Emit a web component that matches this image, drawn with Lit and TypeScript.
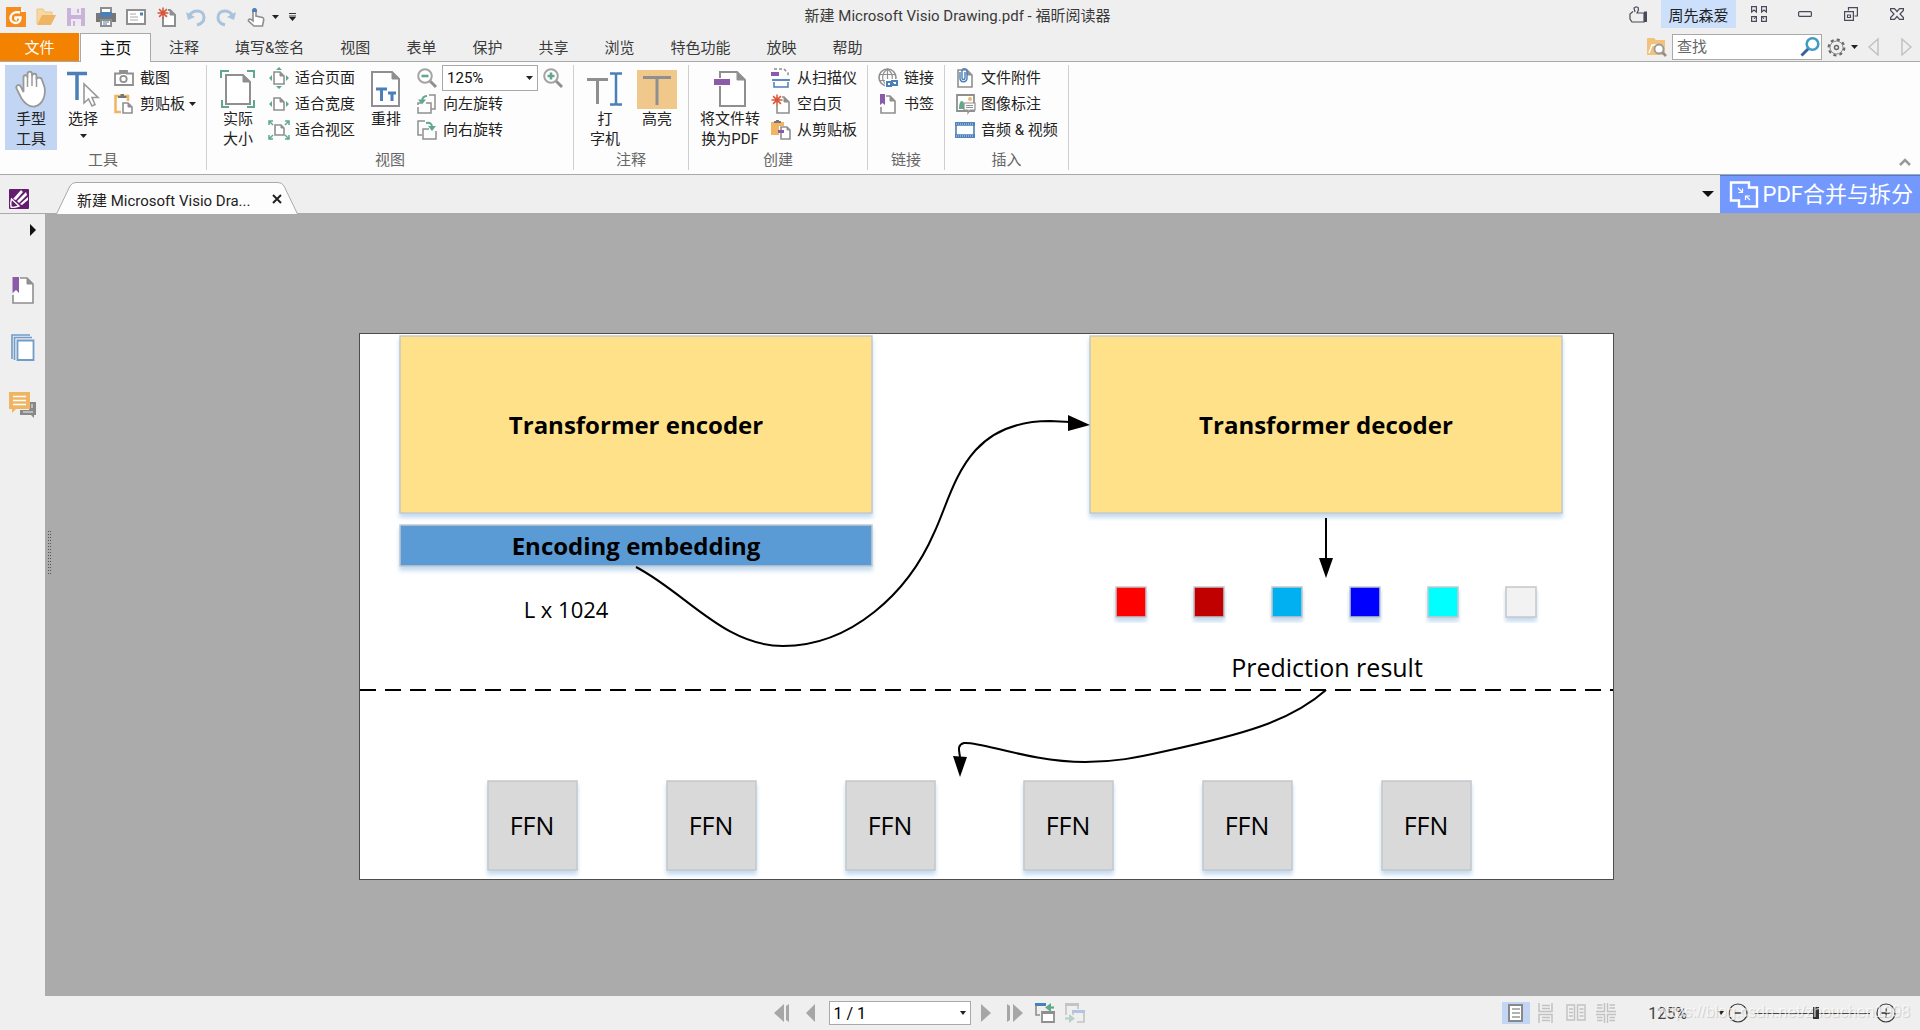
import { LitElement, html, svg, css, nothing, type TemplateResult, type SVGTemplateResult } from "lit";
import { customElement } from "lit/decorators.js";
import { classMap } from "lit/directives/class-map.js";

const GREY = "#8f8f8f";
const GREEN = "#5fa88a";
const BLUE = "#4a7fb8";
const PURPLE = "#8b5aa8";
const AMBER = "#efb563";

const icon = (w: number, h: number, body: SVGTemplateResult) =>
  html`<svg class="icon" width=${w} height=${h} viewBox="0 0 ${w} ${h}" fill="none" aria-hidden="true">${body}</svg>`;

/* A sheet of paper with its top right corner folded over. */
const sheet = (x: number, y: number, w: number, h: number, f: number, sw = 2, stroke = GREY) => svg`
  <path d="M${x} ${y}H${x + w - f}L${x + w} ${y + f}V${y + h}H${x}Z" fill="#fff" stroke=${stroke} stroke-width=${sw}/>
  <path d="M${x + w - f} ${y}V${y + f}H${x + w}Z" fill=${stroke} stroke=${stroke}/>`;

const spark = (x: number, y: number, r: number) => {
  const d = Math.round(r * 7) / 10;
  return svg`<path d="M${x - r} ${y}H${x + r}M${x} ${y - r}V${y + r}M${x - d} ${y - d}L${x + d} ${y + d}M${x - d} ${y + d}L${x + d} ${y - d}" stroke="#d9583a" stroke-width="1.5"/><circle cx=${x} cy=${y} r="2.4" fill="#d9583a"/>`;
};

const lens = (plus: boolean) => icon(20, 20, svg`
  <path d="M13 13L19 19" stroke="${GREY}" stroke-width="3"/>
  <circle cx="8" cy="8" r="6.8" fill="#fff" stroke="#a3a3a3" stroke-width="2"/>
  <path d=${plus ? "M4.5 8H11.5M8 4.5V11.5" : "M4.5 8H11.5"} stroke="${GREEN}" stroke-width="2.6"/>`);

const caret = (w = 7) => icon(w, 4, svg`<path d="M0 0H${w}L${w / 2} 4Z" fill="#222"/>`);

const icons = {
  logo: icon(20, 20, svg`<path d="M0 0H15L20 5V20H0Z" fill="#f68b1f"/><path d="M15 0V5H20Z" fill="#fff"/>
    <path d="M14 5.5C8 4 4.500 7.500 4.500 11C4.500 14 7 16 10 16C13 15.700 14.500 13.500 14.500 10.500L9.500 10.500C9 12 9.500 12.500 11 12.500" stroke="#fff" stroke-width="2.400"/>`),
  open: icon(20, 18, svg`<path d="M1 16V1H7L9 4H16V8" fill="#f5d9a5" stroke="#efc37c"/><path d="M1 17L6 7H20L15 17Z" fill="${AMBER}"/>`),
  save: icon(18, 18, svg`<path d="M0 0H18V18H0Z" fill="#c9b3d8"/><path d="M4 0H14V7H4ZM4 11H14V18H4Z" fill="#efe9f4"/><path d="M10 1H12V5H10ZM6 13H8V18H6Z" fill="#c9b3d8"/>`),
  print: icon(20, 20, svg`<path d="M5 5V1H15V5" fill="#fff" stroke="${GREY}" stroke-width="2"/><path d="M0 6H20V15H0Z" fill="#777"/><path d="M4 5H16V10H4Z" fill="${BLUE}"/><path d="M5 13H15V19H5Z" fill="#fff" stroke="${GREY}" stroke-width="2"/><path d="M7 15H13M7 17H11" stroke="${BLUE}"/>`),
  mail: icon(20, 16, svg`<path d="M1 1H19V15H1Z" fill="#fff" stroke="${GREY}" stroke-width="2"/><path d="M4 5H10M4 8H12M4 11H12" stroke="#aaa"/><path d="M14 3.500H17V6.500H14Z" fill="${BLUE}"/>`),
  create: icon(19, 20, svg`${sheet(6, 3, 12, 16, 5)}<path d="M0 0H11V10H0Z" fill="#efefef"/>${spark(6, 6, 5.5)}`),
  undo: icon(20, 18, svg`<path d="M3 8C7 1 18 1 18 9.500C18 14 15 16 11 17" stroke="#a9c3dc" stroke-width="3"/><path d="M0 4L2 12L9 9Z" fill="#a9c3dc"/>`),
  redo: icon(20, 18, svg`<path d="M17 8C13 1 2 1 2 9.500C2 14 5 16 9 17" stroke="#a9c3dc" stroke-width="3"/><path d="M20 4L18 12L11 9Z" fill="#a9c3dc"/>`),
  touch: icon(18, 20, svg`<path d="M6 12V3.500C6 1.500 9 1.500 9 3.500V9L15.500 10.500C17 11 17 12 16.500 14L15.500 19H7L1.500 14C1 12.500 3 11.500 4 12.500L6 14Z" fill="#fff" stroke="${GREY}" stroke-width="1.600"/><path d="M5 5C4.500 -.5 10.500 -.5 10 5" fill="${BLUE}"/>`),
  more: icon(7, 8, svg`<path d="M0 .5H7M0 3H7" stroke="#333"/><path d="M0 4H7L3.500 8Z" fill="#222"/>`),

  hand: icon(32, 38, svg`<path d="M8.500 22V7.500C8.500 4.500 12.500 4.500 12.500 7.500V4C12.500 .8 17 .8 17 4V6C17.500 3 21.500 3 21.500 6V9.500C21.500 7 26.500 7 27 10L29.500 17C31 25 28 35 19.500 36.500C13 37 9.500 33 6.500 28.500L1.500 18.500C.5 15.500 4 13.500 5.800 16.500Z" fill="#fff" stroke="#999" stroke-width="1.800"/><path d="M12.500 7V17M17 5V16M21.500 7V17" stroke="#999" stroke-width="1.500"/>`),
  select: icon(32, 36, svg`<path d="M0 2.500H20M10 2.500V29" stroke="${BLUE}" stroke-width="3.500"/><path d="M17 13V32L21.500 28L25 35L28 33.500L25 26.500H31Z" fill="#fff" stroke="#999" stroke-width="1.600"/>`),
  camera: icon(20, 16, svg`<path d="M1 3.500H6V1H13V3.500H19V15H1Z" fill="#fff" stroke="${GREY}" stroke-width="1.800"/><path d="M6 1H13V4H6Z" fill="${GREY}"/><circle cx="9.500" cy="9" r="3.200" stroke="${GREY}" stroke-width="1.800"/>`),
  clipboard: icon(20, 20, svg`<path d="M14 7V2H1.500V18H7" stroke="${AMBER}" stroke-width="2.500"/><path d="M4 4V2H6.500V0H10V2H12.500V4Z" fill="#777"/>${sheet(9, 9, 9, 10, 4, 1.6)}`),
  actual: icon(34, 38, svg`<path d="M0 8V1H8M26 1H33V8M33 30V37H26M8 37H1V30" stroke="${GREEN}" stroke-width="2"/>${sheet(5, 5, 24, 29, 7, 2)}`),
  fitPage: icon(20, 20, svg`${sheet(5, 4, 10, 12, 4, 1.6)}<path d="M7 2L10 -1L13 2ZM7 18L10 21L13 18ZM3 7L0 10L3 13ZM17 7L20 10L17 13Z" fill="${GREEN}"/>`),
  fitWidth: icon(20, 20, svg`${sheet(5, 4, 10, 12, 4, 1.6)}<path d="M3 7L0 10L3 13ZM17 7L20 10L17 13Z" fill="${GREEN}"/>`),
  fitView: icon(20, 20, svg`${sheet(6, 5, 9, 10, 3, 1.6)}<path d="M0 5V1H4M0 1L4 5M16 1H20V5M20 1L16 5M20 15V19H16M20 19L16 15M4 19H0V15M0 19L4 15" stroke="${GREEN}" stroke-width="1.500"/>`),
  reflow: icon(30, 37, svg`${sheet(1, 1, 27, 34, 7, 2)}<path d="M5 18H16M10.500 18V30M17 22H25M21 22V30" stroke="${BLUE}" stroke-width="3"/>`),
  rotateLeft: icon(20, 20, svg`<path d="M12 1H18V15H14" stroke="${GREY}" stroke-width="1.500"/><path d="M1 13V19H14V9H9M1 11V9H4" stroke="${GREY}" stroke-width="1.500"/><path d="M10 2C6 2 5 4 5 8" stroke="${GREEN}" stroke-width="2"/><path d="M1 5.500H9L5 10.500Z" fill="${GREEN}"/>`),
  rotateRight: icon(20, 20, svg`<path d="M8 1H1V15H5" stroke="${GREY}" stroke-width="1.500"/><path d="M12 9H6V19H19V11" stroke="${GREY}" stroke-width="1.500"/><path d="M9 3C13 2 15 4 15 7" stroke="${GREEN}" stroke-width="2"/><path d="M11 6H19L15 11Z" fill="${GREEN}"/>`),
  typewriter: icon(36, 34, svg`<path d="M0 7.500H21M10.500 7.500V32" stroke="${GREY}" stroke-width="3"/><path d="M23 1.500H28L29 2.500L30 1.500H35M29 2V32M23 32.500H28L29 31.500L30 32.500H35" stroke="${BLUE}" stroke-width="2.500"/>`),
  highlight: icon(40, 39, svg`<path d="M0 0H40V39H0Z" fill="#f0c88c"/><path d="M6 7.500H34M20 7.500V35" stroke="${GREY}" stroke-width="3"/>`),
  toPdf: icon(32, 37, svg`${sheet(6, 1, 25, 34, 8, 2)}<path d="M0 7H17V15H0Z" fill="#fdfdfd"/><path d="M0 8H16V14H0Z" fill="${PURPLE}"/>`),
  scanner: icon(20, 20, svg`<path d="M3 1H13L17 5V9" stroke="${GREY}" stroke-width="1.500" stroke-dasharray="3 2"/><path d="M0 4H8V8H0Z" fill="${PURPLE}"/><path d="M1 12H19" stroke="${BLUE}" stroke-width="1.800"/><path d="M3 14V19H17V14" stroke="${BLUE}" stroke-width="1.500"/>`),
  blank: icon(20, 20, svg`${sheet(6, 3, 12, 16, 5, 1.6)}<path d="M0 0H11V11H0Z" fill="#fdfdfd"/>${spark(6, 6, 5.5)}`),
  fromClip: icon(20, 20, svg`<path d="M0 2H13V6H8V15H0Z" fill="${AMBER}"/><path d="M3 3V1H5V0H8V1H10V3Z" fill="#777"/>${sheet(10, 7, 9, 12, 3, 1.6)}<path d="M7 10H13V13H7Z" fill="${PURPLE}"/>`),
  link: icon(20, 20, svg`<circle cx="9.500" cy="9.500" r="8.500" fill="#fff" stroke="${GREY}" stroke-width="1.600"/><path d="M1 6.500H18M1 12.500H18M9.500 1V18M9.500 1C3 6 3 13 9.500 18M9.500 1C16 6 16 13 9.500 18" stroke="${GREY}" stroke-width="1.200"/><path d="M7 11H20V20H7Z" fill="#fdfdfd"/><path d="M9 14H13V18H9ZM14 13H19V17H14ZM12 16H16" stroke="${BLUE}" stroke-width="2"/>`),
  bookmark: icon(20, 20, svg`${sheet(3, 2, 14, 17, 5, 1.6)}<path d="M1 0H8V13H1Z" fill="#fdfdfd"/><path d="M2 0H7V11L4.500 9L2 11Z" fill="${PURPLE}"/>`),
  attach: icon(20, 20, svg`${sheet(3, 2, 14, 17, 5, 1.6)}<path d="M5 4V10C5 15 12 15 12 10V3C12 0 7 0 7 3V10C7 12 10 12 10 10V4" stroke="${BLUE}" stroke-width="1.400"/>`),
  image: icon(20, 20, svg`<path d="M2 1H19V17H2Z" fill="#fff" stroke="${GREY}" stroke-width="1.800"/><path d="M4 15C4 10 5 7 7 7C9 7 9 11 9 15Z" fill="${GREEN}"/><circle cx="15" cy="5" r="2" fill="${AMBER}"/><path d="M9 9H20V16H15L13 19V16H9Z" fill="#fff" stroke="${GREY}" stroke-width="1.200"/><path d="M11 11.500H18M11 13.500H18" stroke="${GREY}"/>`),
  media: icon(20, 16, svg`<path d="M1 1H19V15H1Z" fill="#fff" stroke="${BLUE}" stroke-width="1.600"/><path d="M0 2H20M0 14H20" stroke="${BLUE}" stroke-width="3.500"/><path d="M1 2H19M1 14H19" stroke="#cfe0f0" stroke-width="1" stroke-dasharray="1 1"/>`),

  account: icon(20, 17, svg`<path d="M6 6L5 2L7 .8L9 1.500L9.500 4L8 7H15V16H3L1 13V8L4 5.500" stroke="#4a4a5a" stroke-width="1.200"/><path d="M15 5.500H18V16H15Z" fill="#4a4a5a"/>`),
  skins: icon(16, 16, svg`<path d="M.6 .6H5.400V6L3 4L.6 6ZM10.600 .6H15.400V6L13 4L10.600 6ZM.6 10.600H5.400V15.400H.6ZM10.600 10.600H15.400V15.400H10.600Z" stroke="#4a4a5a" stroke-width="1.200"/><path d="M3 13L5 10.500M13 13L11 10.500" stroke="#4a4a5a"/>`),
  minimize: icon(14, 6, svg`<rect x=".6" y=".6" width="12.800" height="4.800" rx="1" stroke="#4a4a5a" stroke-width="1.200"/>`),
  restore: icon(14, 14, svg`<path d="M4.500 3.500V.6H13.400V9H10.500" stroke="#4a4a5a" stroke-width="1.200"/><path d="M.6 4.600H9.400V13.400H.6ZM3.500 8H6.500V10.500H3.500Z" stroke="#4a4a5a" stroke-width="1.200"/>`),
  close: icon(14, 12, svg`<path d="M.6 .6H4.500L7 3.500L9.500 .6H13.400V2.500L10 6L13.400 9.500V11.400H9.500L7 8.500L4.500 11.400H.6V9.500L4 6L.6 2.500Z" stroke="#4a4a5a" stroke-width="1.200"/>`),
  findFolder: icon(20, 20, svg`<path d="M0 1H7L9 3H18V18H0Z" fill="#f0c27c"/><path d="M2 16L5 8H12" stroke="#fff" stroke-width="1.500"/><path d="M15 15L19 19" stroke="${GREY}" stroke-width="2.500"/><circle cx="12" cy="12" r="4.500" fill="#fff" stroke="#999" stroke-width="1.800"/>`),
  search: icon(20, 20, svg`<path d="M9 11L1.500 18.500" stroke="#3a62a0" stroke-width="3"/><circle cx="12.500" cy="7" r="5.800" fill="#fff" stroke="#3f9cc4" stroke-width="2.600"/>`),
  gear: icon(19, 19, svg`<circle cx="9.500" cy="9.500" r="7.800" stroke="#666" stroke-width="2.200" stroke-dasharray="3.060 3.060"/><circle cx="9.500" cy="9.500" r="6.500" fill="#efefef" stroke="#888" stroke-width="1"/><circle cx="9.500" cy="9.500" r="2" stroke="#666" stroke-width="1.400"/>`),
  back: icon(11, 18, svg`<path d="M10 1V17L1 9Z" stroke="#c0c0c0" stroke-width="1.400"/>`),
  forward: icon(11, 18, svg`<path d="M1 1V17L10 9Z" stroke="#c0c0c0" stroke-width="1.400"/>`),
  collapse: icon(12, 8, svg`<path d="M1 7L6 2L11 7" stroke="#999" stroke-width="2.500"/>`),

  editor: icon(20, 20, svg`<rect width="20" height="20" rx="1" fill="#641b70"/><path d="M4 10L12 1L14 3L7 11ZM8 12L17 3L18 6L10 14ZM11 15L19 8V11L13 16Z" fill="#fff"/><path d="M2.500 10L10 17C6 18.500 3 18.500 2 18C1.500 15 1.800 12 2.500 10Z" stroke="#fff" stroke-width="1.400"/>`),
  closeTab: icon(10, 10, svg`<path d="M1 1L9 9M9 1L1 9" stroke="#222" stroke-width="2"/>`),
  listDown: icon(12, 6, svg`<path d="M0 0H12L6 6Z" fill="#111"/>`),
  merge: icon(28, 27, svg`<path d="M1 1.500H19V6.500H27V25.500H9V19.500H1Z" stroke="#fff" stroke-width="2.400"/><path d="M8 7L12 11M12.500 7.500V11.500H8.500M20 19L16 15M15.500 19V15H20" stroke="#fff" stroke-width="1.200"/>`),

  expand: icon(6, 12, svg`<path d="M0 0L6 6L0 12Z" fill="#111"/>`),
  panelBookmark: icon(24, 28, svg`${sheet(2, 1, 20, 25, 6, 1.6)}<path d="M0 0H9V18H0Z" fill="#efefef"/><path d="M9 1.800V18H2.800" fill="#fff"/><path d="M1.500 0H8V16L5 13L1.500 16Z" fill="${PURPLE}"/>`),
  panelPages: icon(24, 28, svg`<path d="M1 25V1H19M3.500 26V3.500H21" stroke="#6f9cc9" stroke-width="1.600"/><path d="M6.500 6.500H22.500V26H6.500Z" fill="#fff" stroke="#6f9cc9" stroke-width="1.800"/>`),
  panelNotes: icon(28, 26, svg`<path d="M17 10H27V23H25V26L22 23H11V18H20V10Z" fill="#888"/><path d="M14 20H24M23 12V16" stroke="#efefef"/><path d="M0 0H21V17H7L3 21V17H0Z" fill="${AMBER}"/><path d="M4 4.500H17M4 8.500H17M4 12.500H17" stroke="#fff" stroke-width="1.400"/>`),
  grip: icon(4, 44, svg`<path d="M.5 0V44M2.500 0V44" stroke="#555" stroke-dasharray="1 2"/>`),

  first: icon(16, 18, svg`<path d="M10 0V18L0 9ZM12 2L15 0V18L12 16Z" fill="#a6a6a6"/>`),
  prev: icon(10, 18, svg`<path d="M9 0V18L0 9Z" fill="#a6a6a6"/>`),
  next: icon(10, 18, svg`<path d="M0 0V18L10 9Z" fill="#a6a6a6"/>`),
  last: icon(16, 18, svg`<path d="M6 0V18L16 9ZM0 0L3 2V16L0 18Z" fill="#a6a6a6"/>`),
  prevView: icon(20, 20, svg`<path d="M5 12H1V1H11" stroke="${GREY}" stroke-width="1.600"/><path d="M0 0H11V3H0Z" fill="${BLUE}"/><path d="M7 9H19V19H7Z" fill="#fff" stroke="${GREY}" stroke-width="1.800"/><path d="M7 8H20V11H7Z" fill="${GREY}"/><path d="M19 4.500H13" stroke="${GREEN}" stroke-width="2.200"/><path d="M16 0V9L10 4.500Z" fill="${GREEN}"/>`),
  nextView: icon(20, 20, svg`<path d="M1 12V1H13V6" stroke="#c4c4c4" stroke-width="1.600"/><path d="M0 0H14V3H0Z" fill="#c4c4c4"/><path d="M12 19H19V8H8V12" stroke="#c4c4c4" stroke-width="1.600"/><path d="M7 7H20V10H7Z" fill="#b0c6e0"/><path d="M0 15.500H6" stroke="#b5d2c5" stroke-width="2.200"/><path d="M4 11V20L10 15.500Z" fill="#b5d2c5"/>`),
  single: icon(16, 18, svg`<path d="M1 1H14V17H1Z" fill="#fff" stroke="#888" stroke-width="2"/><path d="M4 5H12M4 9H12M4 13H12" stroke="#999" stroke-width="1.400"/>`),
  continuous: icon(16, 20, svg`<path d="M1 0V8.500H14V0M1 20V11.500H14V20M4 2.500H12M4 5.500H12M4 14.500H12M4 17.500H12" stroke="#c2c2c2" stroke-width="1.500"/>`),
  facing: icon(20, 18, svg`<path d="M1 1H8.500V16H1ZM11.500 1H19V16H11.500ZM3 5H7M3 8.500H7M3 12H7M13.500 5H17.500M13.500 8.500H17.500M13.500 12H17.500" stroke="#c2c2c2" stroke-width="1.400"/>`),
  facingContinuous: icon(20, 20, svg`<path d="M0 8.500H8.500V0M20 8.500H11.500V0M0 11.500H8.500V20M20 11.500H11.500V20M1 2H6.500M1 5H6.500M13.500 2H19M13.500 5H19M1 14.500H6.500M1 17.500H6.500M13.500 14.500H19M13.500 17.500H19" stroke="#c2c2c2" stroke-width="1.400"/>`),
  zoomOut: icon(20, 20, svg`<circle cx="10" cy="10" r="9" stroke="#333" stroke-width="1.200"/><path d="M6.500 10H13.500" stroke="#333" stroke-width="1.400"/>`),
  zoomIn: icon(20, 20, svg`<circle cx="10" cy="10" r="9" stroke="#333" stroke-width="1.200"/><path d="M5.500 10H14.500M10 5.500V14.500" stroke="#333" stroke-width="1.400"/>`),
};

type IconName = keyof typeof icons;

const controls = css`
  :host, * { box-sizing: border-box; }
  button, input, select { font: inherit; color: inherit; margin: 0; }
  button { display: flex; align-items: center; justify-content: center; padding: 0; border: 0; background: none; white-space: nowrap; }
  select, input { appearance: none; border: 1px solid #a9a9a9; border-radius: 0; background: #fff; outline: 0; }
  .icon { display: block; flex: none; overflow: visible; }
  .combo { display: grid; align-items: center; }
  .combo > * { grid-area: 1 / 1; }
  .combo .icon { justify-self: end; margin-right: 5px; pointer-events: none; }
`;

@customElement("title-bar")
export class TitleBar extends LitElement {
  static styles = [controls, css`
    :host { display: grid; grid-template-columns: 1fr auto 1fr; height: 33px; color: #3a3a3a; }
    .quick { display: flex; align-items: center; gap: 10px; padding-left: 6px; }
    .quick button { width: 20px; height: 33px; }
    .quick .slim { width: 7px; }
    .touch { margin-right: -4px; }
    .title { margin: 0; padding-right: 5px; font-size: 15px; font-weight: 400; line-height: 33px; }
    .window { display: flex; justify-content: flex-end; align-items: center; height: 28px; }
    .window button { width: 46px; height: 28px; }
    .window .user { width: 75px; background: #cce0fb; font-size: 15px; color: #222; }
    .window .account { width: 36px; padding-right: 8px; }
  `];

  private quick: [IconName, string][] = [
    ["logo", "福昕阅读器"], ["open", "打开"], ["save", "保存"], ["print", "打印"],
    ["mail", "邮件"], ["create", "新建"], ["undo", "撤销"], ["redo", "重做"],
  ];

  render() {
    return html`
      <div class="quick">
        ${this.quick.map(([name, label]) => html`<button aria-label=${label}>${icons[name]}</button>`)}
        <button class="touch" aria-label="触摸模式">${icons.touch}</button>
        <button class="slim" aria-label="触摸选项">${caret()}</button>
        <button class="slim" aria-label="自定义">${icons.more}</button>
      </div>
      <h1 class="title">新建 Microsoft Visio Drawing.pdf - 福昕阅读器</h1>
      <div class="window">
        <button class="account" aria-label="账户">${icons.account}</button>
        <button class="user">周先森爱</button>
        <button aria-label="皮肤">${icons.skins}</button>
        <button aria-label="最小化">${icons.minimize}</button>
        <button aria-label="还原">${icons.restore}</button>
        <button aria-label="关闭">${icons.close}</button>
      </div>`;
  }
}

@customElement("ribbon-tabs")
export class RibbonTabs extends LitElement {
  static styles = [controls, css`
    :host { display: flex; height: 29px; border-bottom: 1px solid #a9a9a9; font-size: 15px; color: #3a3a3a; }
    .tabs { display: flex; flex: 1; }
    .tab { height: 28px; padding: 0 18px 2px; }
    .file { width: 79px; margin-right: 1px; background: #f28200; color: #fff; }
    .active { height: 29px; width: 71px; padding: 0 0 2px; border: 1px solid #a9a9a9; border-bottom: 0; background: #fdfdfd; font-size: 16px; color: #111; }
    .tools { display: flex; align-items: center; height: 28px; padding-right: 8px; }
    .search { display: grid; align-items: center; margin: 0 5px; }
    .search > * { grid-area: 1 / 1; }
    .field { width: 150px; height: 26px; padding: 0 28px 0 4px; }
    .field::placeholder { color: #666; opacity: 1; }
    .search button { justify-self: end; margin-right: 2px; }
    .down { margin: 0 10px 0 5px; }
    .forward { margin-left: 22px; }
  `];

  private tabs = ["注释", "填写&签名", "视图", "表单", "保护", "共享", "浏览", "特色功能", "放映", "帮助"];

  render() {
    return html`
      <nav class="tabs">
        <button class="tab file">文件</button>
        <button class="tab active">主页</button>
        ${this.tabs.map((t) => html`<button class="tab">${t}</button>`)}
      </nav>
      <div class="tools">
        <button aria-label="高级搜索">${icons.findFolder}</button>
        <div class="search">
          <input class="field" type="text" placeholder="查找" aria-label="查找" />
          <button aria-label="搜索">${icons.search}</button>
        </div>
        <button aria-label="设置">${icons.gear}</button>
        <button class="down" aria-label="设置选项">${caret()}</button>
        <button aria-label="上一个">${icons.back}</button>
        <button class="forward" aria-label="下一个">${icons.forward}</button>
      </div>`;
  }
}

@customElement("ribbon-panel")
export class RibbonPanel extends LitElement {
  static styles = [controls, css`
    :host { display: flex; padding: 3px 0 4px; background: #fdfdfd; border-bottom: 1px solid #a9a9a9; font-size: 15px; color: #222; }
    .group { display: flex; flex-direction: column; padding: 0 5px; border-right: 1px solid #d0d0d0; }
    .items { display: flex; height: 85px; }
    .name { margin: 0; font-size: 15px; font-weight: 400; line-height: 20px; text-align: center; color: #666; }
    .big { flex-direction: column; justify-content: flex-start; width: 52px; height: 85px; padding-top: 4px; line-height: 20px; }
    .big.on { background: #c2d5f2; }
    .big.wide { width: 72px; }
    .face { display: grid; place-items: center; height: 40px; }
    .big .caret { margin-top: 5px; }
    .col { display: flex; flex-direction: column; margin: 0 5px; }
    .row { display: flex; align-items: center; justify-content: flex-start; gap: 6px; height: 26px; line-height: 24px; }
    .zoom { gap: 5px; }
    .slot { display: grid; place-items: center; width: 20px; }
    .row .caret { margin-left: -2px; }
    .combo select { width: 96px; height: 26px; padding: 0 4px; color: #111; }
    .end { flex: 1; display: flex; align-items: flex-end; justify-content: flex-end; padding: 0 9px 4px; }
  `];

  private big(name: IconName, lines: string[], mod: { on?: boolean; wide?: boolean; down?: boolean } = {}) {
    return html`<button class=${classMap({ big: true, on: !!mod.on, wide: !!mod.wide })}>
      <span class="face">${icons[name]}</span>
      ${lines.map((l) => html`<span>${l}</span>`)}
      ${mod.down ? html`<span class="caret">${caret()}</span>` : nothing}
    </button>`;
  }

  private row(name: IconName, label: string, down = false) {
    return html`<button class="row"><span class="slot">${icons[name]}</span>${label}${
      down ? html`<span class="caret">${caret()}</span>` : nothing}</button>`;
  }

  private group(name: string, body: TemplateResult) {
    return html`<section class="group"><div class="items">${body}</div><h2 class="name">${name}</h2></section>`;
  }

  render() {
    return html`
      ${this.group("工具", html`
        ${this.big("hand", ["手型", "工具"], { on: true })}
        ${this.big("select", ["选择"], { down: true })}
        <div class="col">${this.row("camera", "截图")}${this.row("clipboard", "剪贴板", true)}</div>`)}
      ${this.group("视图", html`
        ${this.big("actual", ["实际", "大小"])}
        <div class="col">${this.row("fitPage", "适合页面")}${this.row("fitWidth", "适合宽度")}${this.row("fitView", "适合视区")}</div>
        ${this.big("reflow", ["重排"])}
        <div class="col">
          <div class="row zoom">
            <button aria-label="缩小">${lens(false)}</button>
            <span class="combo"><select aria-label="缩放比例"><option>125%</option></select>${caret()}</span>
            <button aria-label="放大">${lens(true)}</button>
          </div>
          ${this.row("rotateLeft", "向左旋转")}${this.row("rotateRight", "向右旋转")}
        </div>`)}
      ${this.group("注释", html`${this.big("typewriter", ["打", "字机"])}${this.big("highlight", ["高亮"])}`)}
      ${this.group("创建", html`
        ${this.big("toPdf", ["将文件转", "换为PDF"], { wide: true })}
        <div class="col">${this.row("scanner", "从扫描仪")}${this.row("blank", "空白页")}${this.row("fromClip", "从剪贴板")}</div>`)}
      ${this.group("链接", html`<div class="col">${this.row("link", "链接")}${this.row("bookmark", "书签")}</div>`)}
      ${this.group("插入", html`<div class="col">${this.row("attach", "文件附件")}${this.row("image", "图像标注")}${this.row("media", "音频 & 视频")}</div>`)}
      <div class="end"><button aria-label="折叠功能区">${icons.collapse}</button></div>`;
  }
}

@customElement("document-tabs")
export class DocumentTabs extends LitElement {
  static styles = [controls, css`
    :host { display: flex; align-items: flex-end; height: 39px; border-bottom: 1px solid #a9a9a9; font-size: 15px; color: #222; }
    .editor { width: 38px; height: 30px; padding-top: 2px; }
    .tab { display: grid; margin: 0 0 -1px 18px; }
    .tab > * { grid-area: 1 / 1; }
    .shape { display: block; }
    .label { display: flex; align-items: center; justify-content: space-between; padding: 2px 16px 0 21px; }
    .end { flex: 1; display: flex; align-items: center; justify-content: flex-end; height: 38px; gap: 6px; }
    .banner { display: flex; align-items: center; gap: 5px; height: 38px; padding: 0 7px 0 10px; border-top: 1px solid #4a7ae0; background: #7399ff; color: #fff; font-size: 22px; line-height: 34px; text-decoration: none; white-space: nowrap; }
  `];

  render() {
    return html`
      <button class="editor" aria-label="编辑器">${icons.editor}</button>
      <div class="tab">
        <svg class="shape" width="242" height="32" viewBox="0 0 242 32" aria-hidden="true">
          <path d="M.5 32L14 4Q16 .5 20 .5H222Q226 .5 228 4L241.500 32" fill="#fdfdfd" stroke="#a9a9a9"/>
        </svg>
        <div class="label">
          <button>新建 Microsoft Visio Dra...</button>
          <button aria-label="关闭标签">${icons.closeTab}</button>
        </div>
      </div>
      <div class="end">
        <button aria-label="标签列表">${icons.listDown}</button>
        <a class="banner" href="#merge">${icons.merge}<span>PDF合并与拆分</span></a>
      </div>`;
  }
}

@customElement("side-panel")
export class SidePanel extends LitElement {
  static styles = [controls, css`
    :host { display: flex; flex-direction: column; align-items: center; width: 45px; padding-top: 8px; background: #efefef; }
    .expand { align-self: flex-end; justify-content: flex-end; width: 24px; height: 16px; padding-right: 9px; margin-bottom: 24px; }
    .item { width: 45px; height: 57px; }
  `];

  render() {
    return html`
      <button class="expand" aria-label="展开">${icons.expand}</button>
      <button class="item" aria-label="书签">${icons.panelBookmark}</button>
      <button class="item" aria-label="页面">${icons.panelPages}</button>
      <button class="item" aria-label="注释">${icons.panelNotes}</button>`;
  }
}

@customElement("document-page")
export class DocumentPage extends LitElement {
  static styles = css`
    :host { display: block; box-sizing: border-box; border: 1px solid #4d4d4d; background: #fff; }
    .sheet { display: block; width: 100%; height: auto; }
    text { font-family: "Open Sans", sans-serif; text-anchor: middle; fill: #000; }
    .box { stroke: #c4c8cc; stroke-width: 1.5; filter: url(#soft); }
    .heading { font-size: 24px; font-weight: 700; }
    .label { font-size: 25px; }
    .note { font-size: 22px; }
    .line { fill: none; stroke: #000; stroke-width: 2; }
    .dash { stroke-dasharray: 16 9; }
  `;

  private swatches = ["#ff0000", "#c00000", "#00b0f0", "#0000ff", "#00ffff", "#f2f2f2"];

  render() {
    return html`<svg class="sheet" viewBox="0 0 1253 545" role="img" aria-label="Transformer">
      <defs>
        <filter id="soft" x="-10%" y="-10%" width="120%" height="130%" color-interpolation-filters="sRGB">
          <feDropShadow dx="0" dy="4" stdDeviation="2" flood-color="#9dc3e6" flood-opacity="0.6"/>
        </filter>
      </defs>
      <rect class="box" x="40" y="2" width="472" height="177" fill="#ffe18a"/>
      <text class="heading" x="276" y="100">Transformer encoder</text>
      <rect class="box" x="40" y="191" width="472" height="41" fill="#5b9bd5"/>
      <text class="heading" x="276" y="221">Encoding embedding</text>
      <text class="note" x="206" y="284">L x 1024</text>
      <rect class="box" x="730" y="2" width="472" height="177" fill="#ffe18a"/>
      <text class="heading" x="966" y="100">Transformer decoder</text>
      <path class="line" d="M276 233C326 259 364 312 423 312C491 312 548 259 574 199C594 157 603 87 690 87L710 88"/>
      <path d="M730 91L708 97V81Z"/>
      <path class="line" d="M966 184V226"/>
      <path d="M966 244L959 224H973Z"/>
      ${this.swatches.map((c, i) => svg`<rect class="box" x=${756 + i * 78} y="253" width="30" height="30" fill=${c}/>`)}
      <text class="label" x="967" y="343">Prediction result</text>
      <path class="line dash" d="M0 356H1253"/>
      <path class="line" d="M966 356C930 388 880 401 806 417C775 424 755 428 725 428C670 428 620 407 604 409C597 411 599 416 600 423"/>
      <path d="M600 443L593 422L607 423Z"/>
      ${[0, 1, 2, 3, 4, 5].map((i) => svg`
        <rect class="box" x=${128 + Math.round(i * 178.8)} y="447" width="89" height="89" fill="#d9d9d9"/>
        <text class="label" x=${172 + Math.round(i * 178.8)} y="501">FFN</text>`)}
    </svg>`;
  }
}

@customElement("status-bar")
export class StatusBar extends LitElement {
  static styles = [controls, css`
    :host { position: relative; display: grid; grid-template-columns: 1fr auto 1fr; align-items: center; height: 34px; font-size: 16px; color: #222; }
    .nav { display: flex; align-items: center; gap: 10px; grid-column: 2; margin-right: 62px; }
    .nav .first { margin-right: 6px; }
    .nav .combo { margin-left: 3px; }
    .nav .last { margin: 0 2px 0 6px; }
    .nav select { width: 142px; height: 24px; padding: 0 4px; color: #000; }
    .views { display: flex; align-items: center; gap: 2px; }
    .views button { width: 28px; height: 22px; }
    .views .on { background: #c2d5f2; }
    .right { display: flex; align-items: center; justify-content: flex-end; padding-right: 24px; }
    .percent { display: flex; align-items: center; gap: 31px; margin: 0 4px 0 28px; color: #444; }
    .slider { width: 116px; height: 14px; margin: 0 6px; padding: 0; border: 0; background: linear-gradient(#444, #444) center / 100% 1px no-repeat; }
    .slider::-webkit-slider-thumb { appearance: none; width: 6px; height: 12px; background: #333; }
    .mark { position: absolute; right: 10px; top: 4px; font: 16px/24px "Liberation Sans", sans-serif; color: rgba(255, 255, 255, 0.7); text-shadow: 1px 1px 1px rgba(0, 0, 0, 0.15); pointer-events: none; }
  `];

  render() {
    return html`
      <div class="nav">
        <button class="first" aria-label="首页">${icons.first}</button>
        <button aria-label="上一页">${icons.prev}</button>
        <span class="combo"><select aria-label="页码"><option>1 / 1</option></select>${caret(6)}</span>
        <button aria-label="下一页">${icons.next}</button>
        <button class="last" aria-label="末页">${icons.last}</button>
        <button aria-label="上一视图">${icons.prevView}</button>
        <button aria-label="下一视图">${icons.nextView}</button>
      </div>
      <div class="right">
        <div class="views">
          <button class="on" aria-label="单页">${icons.single}</button>
          <button aria-label="连续">${icons.continuous}</button>
          <button aria-label="双页">${icons.facing}</button>
          <button aria-label="双页连续">${icons.facingContinuous}</button>
        </div>
        <button class="percent">125%${caret(6)}</button>
        <button aria-label="缩小">${icons.zoomOut}</button>
        <input class="slider" type="range" min="0" max="100" value="54" aria-label="缩放" />
        <button aria-label="放大">${icons.zoomIn}</button>
      </div>
      <span class="mark">https://blog.csdn.net/zhouchen1998</span>`;
  }
}

@customElement("app-root")
export class AppRoot extends LitElement {
  static styles = [controls, css`
    :host { display: flex; flex-direction: column; min-height: 100vh; background: #efefef; font-family: Roboto, "Noto Sans CJK SC", sans-serif; }
    .work { flex: 1; display: flex; background: #ababab; }
    .grip { display: flex; align-items: center; width: 8px; padding: 0 3px; margin-top: -104px; }
    .canvas { flex: 1; display: flex; align-items: center; justify-content: center; padding-top: 3px; }
    .page { flex: 0 1 1255px; }
  `];

  render() {
    return html`
      <title-bar></title-bar>
      <ribbon-tabs></ribbon-tabs>
      <ribbon-panel></ribbon-panel>
      <document-tabs></document-tabs>
      <main class="work">
        <side-panel></side-panel>
        <div class="grip">${icons.grip}</div>
        <div class="canvas"><document-page class="page"></document-page></div>
      </main>
      <status-bar></status-bar>`;
  }
}
